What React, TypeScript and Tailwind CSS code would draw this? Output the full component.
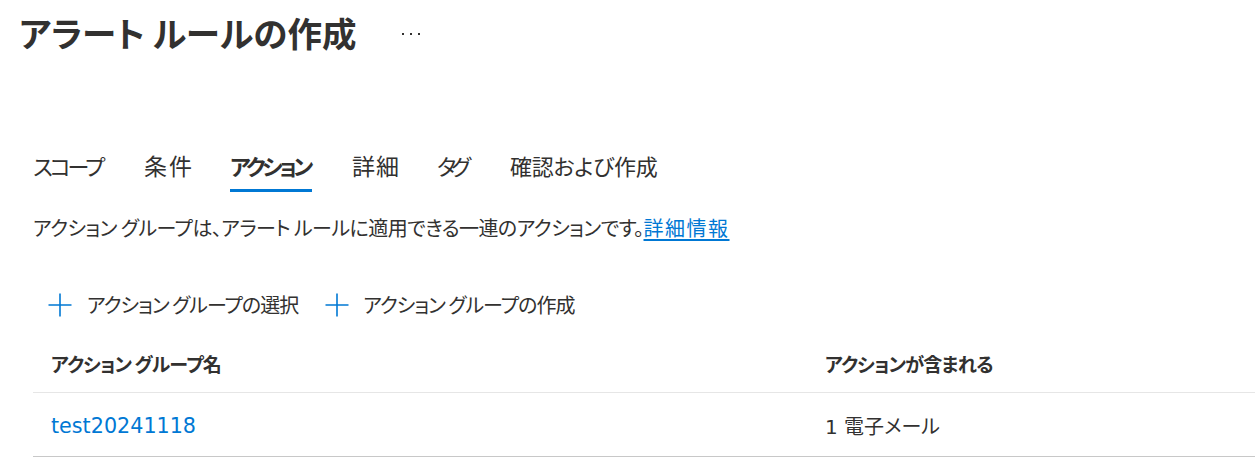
import React from 'react';

const FONT = "font-['Segoe_UI','Noto_Sans_CJK_JP',sans-serif] [font-feature-settings:'palt']";
const LATIN = "font-['DejaVu_Sans','Noto_Sans_CJK_JP',sans-serif]";

// fixed widths + tracking so the narrow kana / wide kanji of the original line up
const tabs = [
  { label: 'スコープ', cls: 'w-[71px] text-[22px] tracking-[-3px]' },
  { label: '条件', cls: 'w-[46px] text-[23px] tracking-[2px]' },
  { label: 'アクション', cls: 'w-[82px] text-[22px] tracking-[-3.5px] font-bold' },
  { label: '詳細', cls: 'w-[45px] text-[23px] tracking-[1px]' },
  { label: 'タグ', cls: 'w-[33px] text-[22px] tracking-[-5px]' },
  { label: '確認および作成', cls: 'w-[146px] text-[22px] tracking-[-0.3px]' },
];

const PlusIcon: React.FC = () => (
  <svg width="24" height="24" viewBox="0 0 24 24" aria-hidden>
    <path d="M12 0.5v23M0.5 12h23" stroke="#0078d4" strokeWidth="1.6" fill="none" />
  </svg>
);

export default function App() {
  return (
    <div className={`w-[1255px] h-[466px] bg-white text-[#323130] overflow-hidden ${FONT}`}>
      <div className="flex items-center h-[64px] pl-[19px]">
        <h1 className="text-[34.5px] font-semibold leading-none">アラート ルールの作成</h1>
        <div className="ml-[46px] mt-[4px] flex gap-[6px]" aria-label="More">
          <span className="w-[2px] h-[2px] bg-[#323130]" />
          <span className="w-[2px] h-[2px] bg-[#323130]" />
          <span className="w-[2px] h-[2px] bg-[#323130]" />
        </div>
      </div>

      <div className="flex pl-[33px] mt-[82px] gap-[40px]">
        {tabs.map((t) => {
          const active = t.label === 'アクション';
          return (
            <div key={t.label} className="flex flex-col">
              <span className={`leading-[38px] whitespace-nowrap ${t.cls}`}>{t.label}</span>
              <span className={`mt-[5px] h-[3px] ${active ? 'bg-[#0078d4]' : 'bg-transparent'}`} />
            </div>
          );
        })}
      </div>

      <p className="pl-[33px] mt-[22px] text-[20px] leading-[28px]">
        <span className="tracking-[-0.55px]">アクション グループは、アラート ルールに適用できる一連のアクションです。</span>
        <a className="text-[#0078d4] tracking-[1.5px] underline underline-offset-[3px] decoration-[#0078d4]">詳細情報</a>
      </p>

      <div className="flex items-center pl-[48px] mt-[47px] h-[32px]">
        <button type="button" className="flex items-center gap-[15px] text-[20px] tracking-[-1px]">
          <PlusIcon />
          <span>アクション グループの選択</span>
        </button>
        <button type="button" className="flex items-center gap-[14px] text-[20px] tracking-[-1px] ml-[27px]">
          <PlusIcon />
          <span>アクション グループの作成</span>
        </button>
      </div>

      <div className="ml-[33px] mt-[16px]">
        <div className="flex items-center h-[56px] border-b border-[#e6e6e6] text-[19px] font-bold tracking-[-0.8px]">
          <div className="w-[792px] pl-[18px]">アクション グループ名</div>
          <div>アクションが含まれる</div>
        </div>
        <div className={`flex items-center h-[64px] pt-[5px] border-b border-[#c8c8c8] text-[20px] ${LATIN}`}>
          <div className="w-[792px] pl-[18px] text-[#0078d4] text-[20.7px]">test20241118</div>
          <div>1 電子メール</div>
        </div>
      </div>
    </div>
  );
}
